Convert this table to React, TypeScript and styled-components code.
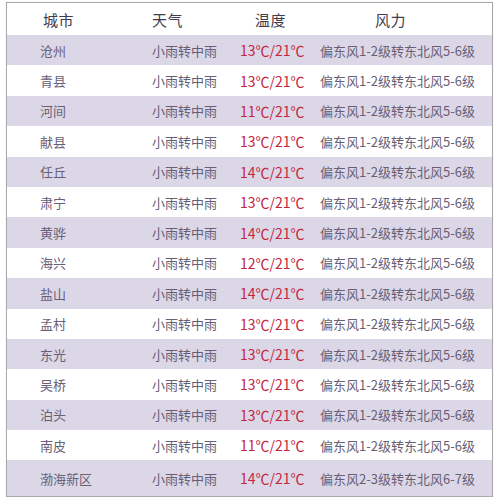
import styled, { createGlobalStyle } from "styled-components";

const GlobalStyle = createGlobalStyle`
  html, body {
    margin: 0;
    padding: 0;
    background: #ffffff;
  }
  body {
    font-family: "Noto Sans CJK SC", "Noto Sans", sans-serif;
  }
`;

const Frame = styled.div`
  width: 487px;
  height: 495px;
  margin: 2px 0 0 6px;
  border: 1px solid #a9a9ad;
  box-sizing: border-box;
  display: grid;
  grid-template-rows: 32px repeat(14, 30.4px) 1fr;
  box-shadow: 0 0 1px rgba(0, 0, 0, 0.15);
`;

const Row = styled.div<{ $shade?: boolean }>`
  display: grid;
  grid-template-columns: 112px 88px 80px 1fr;
  padding-left: 33px;
  align-items: center;
  background: ${(p) => (p.$shade ? "#dcd7e7" : "#ffffff")};
`;

const HeadCell = styled.div<{ $indent: number }>`
  padding-left: ${(p) => p.$indent}px;
  font-size: 15px;
  color: #433c4e;
  letter-spacing: 0.5px;
`;

const Cell = styled.div`
  font-size: 13px;
  color: #685f76;
  white-space: nowrap;
`;

const Temp = styled(Cell)`
  color: #c4263e;
  font-size: 14px;
`;

type Rec = { city: string; temp: string; wind: string };

const data: Rec[] = [
  { city: "沧州", temp: "13℃/21℃", wind: "偏东风1-2级转东北风5-6级" },
  { city: "青县", temp: "13℃/21℃", wind: "偏东风1-2级转东北风5-6级" },
  { city: "河间", temp: "11℃/21℃", wind: "偏东风1-2级转东北风5-6级" },
  { city: "献县", temp: "13℃/21℃", wind: "偏东风1-2级转东北风5-6级" },
  { city: "任丘", temp: "14℃/21℃", wind: "偏东风1-2级转东北风5-6级" },
  { city: "肃宁", temp: "13℃/21℃", wind: "偏东风1-2级转东北风5-6级" },
  { city: "黄骅", temp: "14℃/21℃", wind: "偏东风1-2级转东北风5-6级" },
  { city: "海兴", temp: "12℃/21℃", wind: "偏东风1-2级转东北风5-6级" },
  { city: "盐山", temp: "14℃/21℃", wind: "偏东风1-2级转东北风5-6级" },
  { city: "孟村", temp: "13℃/21℃", wind: "偏东风1-2级转东北风5-6级" },
  { city: "东光", temp: "13℃/21℃", wind: "偏东风1-2级转东北风5-6级" },
  { city: "吴桥", temp: "13℃/21℃", wind: "偏东风1-2级转东北风5-6级" },
  { city: "泊头", temp: "13℃/21℃", wind: "偏东风1-2级转东北风5-6级" },
  { city: "南皮", temp: "11℃/21℃", wind: "偏东风1-2级转东北风5-6级" },
  { city: "渤海新区", temp: "14℃/21℃", wind: "偏东风2-3级转东北风6-7级" },
];

export default function App() {
  return (
    <>
      <GlobalStyle />
      <Frame>
        <Row>
          <HeadCell $indent={3}>城市</HeadCell>
          <HeadCell $indent={0}>天气</HeadCell>
          <HeadCell $indent={15}>温度</HeadCell>
          <HeadCell $indent={55}>风力</HeadCell>
        </Row>
        {data.map((r, i) => (
          <Row key={r.city} $shade={i % 2 === 0}>
            <Cell>{r.city}</Cell>
            <Cell>小雨转中雨</Cell>
            <Temp>{r.temp}</Temp>
            <Cell>{r.wind}</Cell>
          </Row>
        ))}
      </Frame>
    </>
  );
}
